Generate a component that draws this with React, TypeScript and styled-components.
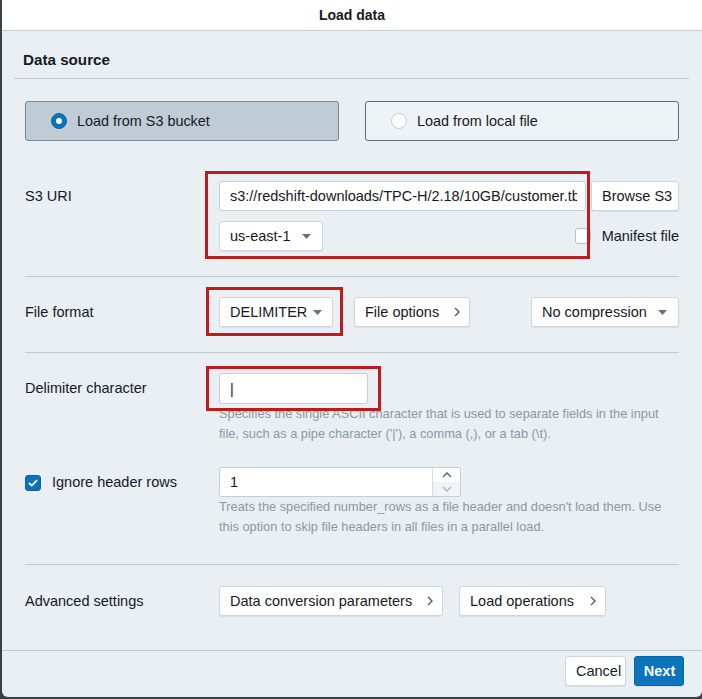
import React from "react";
import styled, { createGlobalStyle } from "styled-components";

const GlobalStyle = createGlobalStyle`
  html, body { margin: 0; padding: 0; background: #3b4046; }
  body {
    font-family: "Liberation Sans", Arial, sans-serif;
    color: #16191f;
    -webkit-font-smoothing: antialiased;
  }
  * { box-sizing: border-box; }
`;

const Page = styled.div`
  width: 702px;
  height: 699px;
  padding-left: 2px;
  overflow: hidden;
  background: #3b4046;
`;

const Dialog = styled.div`
  width: 700px;
  height: 697px;
  display: flex;
  flex-direction: column;
  background: #e9eff3;
  border-radius: 0 0 6px 6px;
  overflow: hidden;
`;

const Header = styled.header`
  flex: none;
  height: 31px;
  background: #ffffff;
  border-bottom: 1px solid #c5cbd1;
  display: flex;
  align-items: center;
  justify-content: center;
  font-size: 14px;
  font-weight: 700;
`;

const Body = styled.main`
  flex: 1;
  display: flex;
  flex-direction: column;
`;

const SectionHeading = styled.h2`
  margin: 0 13px 0 12px;
  padding: 20px 0 9px 9px;
  font-size: 15.2px;
  line-height: 18px;
  font-weight: 700;
  border-bottom: 1px solid #c2c9cf;
`;

const Content = styled.div`
  padding: 0 23px;
`;

const SourceCards = styled.div`
  margin-top: 22px;
  display: grid;
  grid-template-columns: 1fr 1fr;
  gap: 26px;
`;

const SourceCard = styled.div<{ $selected?: boolean }>`
  height: 40px;
  display: flex;
  align-items: center;
  gap: 10px;
  padding-left: 25px;
  border-radius: 3px;
  font-size: 14.4px;
  border: 1px solid ${(p) => (p.$selected ? "#7b8794" : "#5f6b7a")};
  background: ${(p) => (p.$selected ? "#bfccd5" : "#eef3f6")};
`;

const Radio = styled.span<{ $checked?: boolean }>`
  width: 16px;
  height: 16px;
  border-radius: 50%;
  flex: none;
  display: flex;
  align-items: center;
  justify-content: center;
  background: ${(p) => (p.$checked ? "#0a73b9" : "#ffffff")};
  border: 1px solid ${(p) => (p.$checked ? "#0a63a0" : "#c8ced3")};
  &::after {
    content: "";
    width: 6px;
    height: 6px;
    border-radius: 50%;
    background: #ffffff;
    display: ${(p) => (p.$checked ? "block" : "none")};
  }
`;

const FieldRow = styled.section<{ $top: number; $bottom: number; $divider?: boolean }>`
  display: grid;
  grid-template-columns: 194px 1fr;
  padding-top: ${(p) => p.$top}px;
  padding-bottom: ${(p) => p.$bottom}px;
  border-bottom: ${(p) => (p.$divider ? "1px solid #c2c9cf" : "none")};
`;

const Label = styled.div`
  font-size: 14.5px;
  line-height: 31px;
  display: flex;
  align-items: center;
  gap: 11px;
  align-self: start;
`;

const Controls = styled.div`
  position: relative;
  display: flex;
  flex-direction: column;
`;

const Line = styled.div<{ $gap?: number; $top?: number }>`
  display: flex;
  align-items: center;
  gap: ${(p) => p.$gap ?? 5}px;
  margin-top: ${(p) => p.$top ?? 0}px;
`;

const TextInput = styled.input<{ $width?: number; $height?: number }>`
  height: ${(p) => p.$height ?? 30}px;
  ${(p) => (p.$width ? `width: ${p.$width}px;` : "flex: 1; min-width: 0;")}
  padding: 0 8px 0 10px;
  border: 1px solid #c8ced3;
  border-radius: 2px;
  background: #ffffff;
  font: inherit;
  font-size: 14.5px;
  color: #16191f;
  outline: none;
`;

const Button = styled.button<{ $width?: number; $primary?: boolean }>`
  height: 30px;
  ${(p) => (p.$width ? `width: ${p.$width}px;` : "")}
  padding: 0 9px 0 10px;
  display: flex;
  align-items: center;
  justify-content: ${(p) => (p.$primary ? "center" : "space-between")};
  gap: 6px;
  flex: none;
  font: inherit;
  font-size: 14.5px;
  font-weight: ${(p) => (p.$primary ? 700 : 400)};
  color: ${(p) => (p.$primary ? "#ffffff" : "#16191f")};
  background: ${(p) => (p.$primary ? "#0a75bb" : "#ffffff")};
  border: 1px solid ${(p) => (p.$primary ? "#0a67a5" : "#cfd5da")};
  border-radius: 3px;
  box-shadow: 0 1px 1px rgba(0, 0, 0, 0.07);
  white-space: nowrap;
  overflow: hidden;

  svg {
    flex: none;
  }
`;

const Select = styled(Button)`
  padding: 0 11px 0 10px;
`;

const Checkbox = styled.span<{ $checked?: boolean }>`
  width: 16px;
  height: 16px;
  flex: none;
  border-radius: 3px;
  display: flex;
  align-items: center;
  justify-content: center;
  background: ${(p) => (p.$checked ? "#0b72b7" : "#ffffff")};
  border: 1px solid ${(p) => (p.$checked ? "#0a63a0" : "#b9c2c9")};
`;

const CheckLabel = styled.div`
  margin-left: auto;
  display: flex;
  align-items: center;
  gap: 11px;
  font-size: 14.5px;
`;

const Help = styled.p`
  margin: 0;
  font-size: 12.8px;
  line-height: 20px;
  color: #8c98a2;
  white-space: nowrap;
`;

const NumberField = styled.div`
  width: 242px;
  height: 30px;
  display: flex;
  border: 1px solid #c8ced3;
  border-radius: 2px;
  background: #ffffff;
  overflow: hidden;
`;

const NumberInput = styled.input`
  flex: 1;
  min-width: 0;
  border: none;
  padding: 0 10px;
  font: inherit;
  font-size: 14.5px;
  color: #16191f;
  outline: none;
  background: transparent;
`;

const Spinner = styled.div`
  width: 28px;
  display: flex;
  flex-direction: column;
  border-left: 1px solid #d5dbdf;
`;

const SpinHalf = styled.div<{ $muted?: boolean }>`
  flex: 1;
  display: flex;
  align-items: center;
  justify-content: center;
  background: ${(p) => (p.$muted ? "#f1f3f5" : "#ffffff")};
`;

const Annotation = styled.div<{ $top: number; $left: number; $w: number; $h: number }>`
  position: absolute;
  top: ${(p) => p.$top}px;
  left: ${(p) => p.$left}px;
  width: ${(p) => p.$w}px;
  height: ${(p) => p.$h}px;
  border: 3px solid #be1c1c;
  pointer-events: none;
`;

const Footer = styled.footer`
  flex: none;
  height: 47px;
  border-top: 1px solid #c2c9cf;
  display: flex;
  justify-content: flex-end;
  align-items: flex-start;
  gap: 8px;
  padding: 5px 18px 0 0;
`;

const Caret = () => (
  <svg width="9" height="5" viewBox="0 0 9 5">
    <polygon points="0,0 9,0 4.5,5" fill="#687078" />
  </svg>
);

const Chevron = () => (
  <svg width="6" height="10" viewBox="0 0 6 10">
    <polyline points="1,1 5,5 1,9" fill="none" stroke="#545b64" strokeWidth="1.4" />
  </svg>
);

const Tick = () => (
  <svg width="10" height="8" viewBox="0 0 10 8">
    <polyline points="1,4 3.8,6.6 9,1.2" fill="none" stroke="#ffffff" strokeWidth="1.8" />
  </svg>
);

const SpinArrow = ({ up, color }: { up?: boolean; color: string }) => (
  <svg width="10" height="6" viewBox="0 0 10 6">
    <polyline
      points={up ? "1,5 5,1 9,5" : "1,1 5,5 9,1"}
      fill="none"
      stroke={color}
      strokeWidth="1.4"
    />
  </svg>
);

export default function App() {
  return (
    <>
      <GlobalStyle />
      <Page>
        <Dialog>
          <Header>Load data</Header>
          <Body>
            <SectionHeading>Data source</SectionHeading>
            <Content>
              <SourceCards>
                <SourceCard $selected>
                  <Radio $checked />
                  Load from S3 bucket
                </SourceCard>
                <SourceCard>
                  <Radio />
                  Load from local file
                </SourceCard>
              </SourceCards>

              <FieldRow $top={40} $bottom={25} $divider>
                <Label>S3 URI</Label>
                <Controls>
                  <Line $gap={5}>
                    <TextInput
                      readOnly
                      value="s3://redshift-downloads/TPC-H/2.18/10GB/customer.tbl"
                    />
                    <Button $width={88}>Browse S3</Button>
                  </Line>
                  <Line $top={10}>
                    <Select $width={104}>
                      us-east-1
                      <Caret />
                    </Select>
                    <CheckLabel>
                      <Checkbox />
                      Manifest file
                    </CheckLabel>
                  </Line>
                  <Annotation $top={-10} $left={-14} $w={385} $h={88} />
                </Controls>
              </FieldRow>

              <FieldRow $top={20} $bottom={24} $divider>
                <Label>File format</Label>
                <Controls>
                  <Line $gap={21}>
                    <Select $width={114}>
                      DELIMITER
                      <Caret />
                    </Select>
                    <Button $width={116}>
                      File options
                      <Chevron />
                    </Button>
                    <Select $width={148} style={{ marginLeft: "auto" }}>
                      No compression
                      <Caret />
                    </Select>
                  </Line>
                  <Annotation $top={-10} $left={-13} $w={137} $h={49} />
                </Controls>
              </FieldRow>

              <FieldRow $top={20} $bottom={23}>
                <Label>Delimiter character</Label>
                <Controls>
                  <Line>
                    <TextInput $width={149} $height={31} readOnly value="|" />
                  </Line>
                  <Help>
                    Specifies the single ASCII character that is used to separate fields in the input
                    <br />
                    file, such as a pipe character ('|'), a comma (,), or a tab (\t).
                  </Help>
                  <Annotation $top={-7} $left={-13} $w={175} $h={45} />
                </Controls>
              </FieldRow>

              <FieldRow $top={0} $bottom={27} $divider>
                <Label>
                  <Checkbox $checked>
                    <Tick />
                  </Checkbox>
                  Ignore header rows
                </Label>
                <Controls>
                  <NumberField>
                    <NumberInput readOnly value="1" />
                    <Spinner>
                      <SpinHalf>
                        <SpinArrow up color="#545b64" />
                      </SpinHalf>
                      <SpinHalf $muted>
                        <SpinArrow color="#aab4bc" />
                      </SpinHalf>
                    </Spinner>
                  </NumberField>
                  <Help>
                    Treats the specified number_rows as a file header and doesn't load them. Use
                    <br />
                    this option to skip file headers in all files in a parallel load.
                  </Help>
                </Controls>
              </FieldRow>

              <FieldRow $top={21} $bottom={0}>
                <Label>Advanced settings</Label>
                <Controls>
                  <Line $gap={16}>
                    <Button $width={224}>
                      Data conversion parameters
                      <Chevron />
                    </Button>
                    <Button $width={147}>
                      Load operations
                      <Chevron />
                    </Button>
                  </Line>
                </Controls>
              </FieldRow>
            </Content>
          </Body>
          <Footer>
            <Button $width={61}>Cancel</Button>
            <Button $primary $width={50}>
              Next
            </Button>
          </Footer>
        </Dialog>
      </Page>
    </>
  );
}
